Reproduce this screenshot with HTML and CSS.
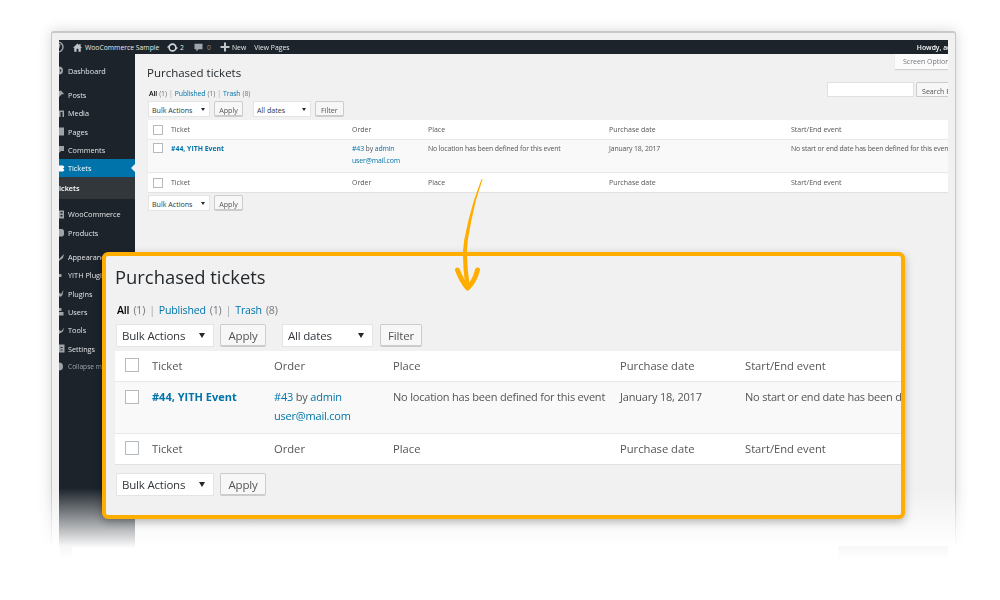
FILE: index.html
```html
<!DOCTYPE html>
<html lang="en">
<head>
    <meta charset="UTF-8">
    <title>Purchased tickets</title>
    <link rel="stylesheet" href="styles.css">
</head>
<body>
    <div class="stage">
        <div class="window">
            <div class="screen">
                <div class="adminbar">
                    <svg class="bar-icon logo" viewBox="0 0 12 12"><circle cx="6" cy="6" r="5" fill="none" stroke="#a0a5aa" stroke-width="1.4"/><path d="M4 3l2 6 2-6" fill="none" stroke="#a0a5aa" stroke-width="1.2"/></svg>
                    <svg class="bar-icon home" viewBox="0 0 10 10"><path d="M5 .6L0 5.2h1.400V9.800h2.500V6.400h2.200v3.400h2.500V5.200H10L8.400 3.700V1H7v1.400z" fill="#c3c6c9"/></svg>
                    <span class="bar-site">WooCommerce Sample</span>
                    <svg class="bar-icon refresh" viewBox="0 0 12 12"><circle cx="6" cy="6" r="3.700" fill="none" stroke="#d5d7d9" stroke-width="1.700"/><path d="M0 6h3L1.500 3.800zM12 6H9l1.500 2.200z" fill="#d5d7d9"/></svg>
                    <span class="bar-count">2</span>
                    <svg class="bar-icon comment" viewBox="0 0 9 9"><path d="M.5.800h8v5.400H4.600L2.400 8.600V6.200H.5z" fill="#a0a5aa"/></svg>
                    <span class="bar-count dim">0</span>
                    <svg class="bar-icon plus" viewBox="0 0 9 9"><path d="M3.600.5h1.800v3.100h3.100v1.800H5.400v3.100H3.600V5.400H.5V3.600h3.100z" fill="#c3c6c9"/></svg>
                    <span class="bar-new">New</span>
                    <span class="bar-view">View Pages</span>
                    <span class="bar-howdy">Howdy, admin</span>
                </div>
                <div class="columns">
                    <ul class="adminmenu">
                        <li class="group"><svg class="mi" viewBox="0 0 6 9"><path d="M0 .5a4 4 0 0 1 0 8zM1 3v3l1.500-1.500z" fill-rule="evenodd"/></svg>Dashboard</li>
                        <li class="group"><svg class="mi" viewBox="0 0 6 9"><path d="M0 1l2-.5 3 3.500-2.500.5L0 7z"/></svg>Posts</li>
                        <li><svg class="mi" viewBox="0 0 6 9"><path d="M0 1.500h5v6.500H3.500V3H1.500v5H0z"/></svg>Media</li>
                        <li><svg class="mi" viewBox="0 0 6 9"><path d="M0 .5h5v8H0z"/></svg>Pages</li>
                        <li><svg class="mi" viewBox="0 0 6 9"><path d="M0 1h5v5H2L0 8z"/></svg>Comments</li>
                        <li class="current"><svg class="mi" viewBox="0 0 6 9"><path d="M0 1.500h4L5.500 3 4 4.500l1.500 1.500L4 7.500H0z"/></svg>Tickets</li>
                        <li class="submenu">ickets</li>
                        <li class="group"><svg class="mi" viewBox="0 0 6 9"><path d="M0 .5h5v8H0zM1.500 2v1.500h2V2zM1.500 5v1.500h2V5z" fill-rule="evenodd"/></svg>WooCommerce</li>
                        <li><svg class="mi" viewBox="0 0 6 9"><path d="M0 1h3.500L5 2.500V7L3.500 8.500H0z"/></svg>Products</li>
                        <li class="group"><svg class="mi" viewBox="0 0 6 9"><path d="M0 6L5 1 4 5 0 8z"/></svg>Appearance</li>
                        <li><svg class="mi" viewBox="0 0 6 9"><path d="M0 3h2.500v3H0z"/></svg>YITH Plugins</li>
                        <li><svg class="mi" viewBox="0 0 6 9"><path d="M0 3.500L2 5 4.500 1 3.500 6 1.500 8 0 7z"/></svg>Plugins</li>
                        <li><svg class="mi" viewBox="0 0 6 9"><path d="M0 1h2.500v3H0zM0 5h4.500v3.500H0z"/></svg>Users</li>
                        <li><svg class="mi" viewBox="0 0 6 9"><path d="M0 4l2.500 1L5 1.500 4 5.500 1.500 7 0 8z"/></svg>Tools</li>
                        <li><svg class="mi" viewBox="0 0 6 9"><path d="M0 .5h5.500v8H0zM1.500 3v1h2V3zM1.500 5.500v1h2v-1z" fill-rule="evenodd"/></svg>Settings</li>
                        <li class="collapse"><svg class="mi" viewBox="0 0 6 9"><path d="M0 .5a4 4 0 0 1 0 8z"/></svg>Collapse menu</li>
                    </ul>
                    <div class="content small">
                        <div class="screen-options"><span>Screen Options</span></div>
                        <h1>Purchased tickets</h1>
                        <div class="search-box">
                            <span class="search-input"></span>
                            <span class="btn search-btn">Search Purchased tickets</span>
                        </div>
                        <p class="subsub"><b>All</b> <em>(1)</em> <u>|</u> <a>Published</a> <em>(1)</em> <u>|</u> <a>Trash</a> <em>(8)</em></p>
                        <div class="tablenav">
                            <span class="select bulk">Bulk Actions</span>
                            <span class="btn apply">Apply</span>
                            <span class="select dates">All dates</span>
                            <span class="btn filter">Filter</span>
                        </div>
                        <div class="table">
                            <div class="row head">
                                <span class="check"></span><span>Ticket</span><span>Order</span><span>Place</span><span>Purchase date</span><span>Start/End event</span>
                            </div>
                            <div class="row body">
                                <span class="check"></span>
                                <span><a class="strong">#44, YITH Event</a></span>
                                <span><a>#43</a> by <a>admin</a><br><a>user@mail.com</a></span>
                                <span>No location has been defined for this event</span>
                                <span>January 18, 2017</span>
                                <span>No start or end date has been defined for this event</span>
                            </div>
                            <div class="row foot">
                                <span class="check"></span><span>Ticket</span><span>Order</span><span>Place</span><span>Purchase date</span><span>Start/End event</span>
                            </div>
                        </div>
                        <div class="tablenav lower">
                            <span class="select bulk">Bulk Actions</span>
                            <span class="btn apply">Apply</span>
                        </div>
                    </div>
                </div>
            </div>
        </div>

        <div class="fade"></div>
        <div class="scrap scrap-left"></div>
        <div class="scrap scrap-right"></div>

        <div class="panel">
            <div class="content large">
                <h1>Purchased tickets</h1>
                <p class="subsub"><b>All</b> <em>(1)</em> <u>|</u> <a>Published</a> <em>(1)</em> <u>|</u> <a>Trash</a> <em>(8)</em></p>
                <div class="tablenav">
                    <span class="select bulk">Bulk Actions</span>
                    <span class="btn apply">Apply</span>
                    <span class="select dates">All dates</span>
                    <span class="btn filter">Filter</span>
                </div>
                <div class="table">
                    <div class="row head">
                        <span class="check"></span><span>Ticket</span><span>Order</span><span>Place</span><span>Purchase date</span><span>Start/End event</span>
                    </div>
                    <div class="row body">
                        <span class="check"></span>
                        <span><a class="strong">#44, YITH Event</a></span>
                        <span><a>#43</a> by <a>admin</a><br><a>user@mail.com</a></span>
                        <span>No location has been defined for this event</span>
                        <span>January 18, 2017</span>
                        <span>No start or end date has been defined for this event</span>
                    </div>
                    <div class="row foot">
                        <span class="check"></span><span>Ticket</span><span>Order</span><span>Place</span><span>Purchase date</span><span>Start/End event</span>
                    </div>
                </div>
                <div class="tablenav lower">
                    <span class="select bulk">Bulk Actions</span>
                    <span class="btn apply">Apply</span>
                </div>
            </div>
        </div>

        <svg class="arrow" viewBox="0 0 40 120">
            <path d="M26.500 1L19 22 13.500 42 9.200 62 7.800 75 8.600 92 10.500 110H15L12.800 92 11.800 75 12.800 62 16.500 42 21 22 27.500 1.500Z" fill="#ffae00"/>
            <path d="M2.500 92C5 99 9 106 12.700 110 17 106 20.500 100 22.500 92" fill="none" stroke="#ffae00" stroke-width="5" stroke-linecap="round" stroke-linejoin="round"/>
        </svg>
    </div>
</body>
</html>
```

FILE: styles.css
```css
body {
    margin: 0;
    background-color: #fff;
    font-family: "Open Sans", "Noto Sans", sans-serif;
    color: #555;
}

.stage {
    position: relative;
    width: 1000px;
    height: 600px;
    overflow: hidden;
    background-color: #fff;
}

/* the browser window with the full wp-admin page */
.window {
    position: absolute;
    left: 51px;
    top: 31px;
    width: 889px;
    height: 530px;
    padding: 7px 7px 0;
    background-color: #f1f1f1;
    border: 1px solid #c8c8c8;
    border-width: 2px 1px 0;
    border-radius: 3px 3px 0 0;
    box-shadow: 0 0 14px rgba(0, 0, 0, 0.16);
}

.screen {
    height: 100%;
    overflow: hidden;
    filter: blur(0.3px);
}

.adminbar {
    display: flex;
    align-items: center;
    height: 14px;
    background-color: #1c232b;
    color: #e6e8e9;
    font-size: 6.800px;
    white-space: nowrap;
}

.bar-icon {
    flex: none;
}

.logo {
    width: 12px;
    height: 12px;
    margin-left: -7px;
}

.home {
    width: 9px;
    height: 9px;
    margin-left: 9px;
}

.bar-site {
    width: 74px;
    margin-left: 3px;
}

.refresh {
    width: 11px;
    height: 11px;
    margin-left: 8px;
}

.bar-count {
    margin-left: 2px;
    width: 6px;
}

.comment {
    width: 9px;
    height: 9px;
    margin-left: 8px;
}

.dim {
    margin-left: 4px;
    color: #8b9095;
}

.plus {
    width: 10px;
    height: 10px;
    margin-left: 7px;
}

.bar-new {
    margin-left: 2px;
}

.bar-view {
    margin-left: 8px;
}

.bar-howdy {
    margin-left: auto;
    margin-right: -16px;
    font-weight: 600;
    color: #fff;
}

.columns {
    display: flex;
    height: 520px;
}

.adminmenu {
    flex: none;
    width: 76px;
    margin: 0;
    padding: 7.500px 0 0;
    list-style: none;
    overflow: hidden;
    background-color: #1c232b;
    color: #e4e6e7;
    font-size: 7.300px;
}

.adminmenu li {
    display: flex;
    align-items: center;
    height: 18.300px;
    white-space: nowrap;
}

.adminmenu li.group {
    margin-top: 6px;
}

.adminmenu li:first-child {
    margin-top: 0;
}

.mi {
    flex: none;
    width: 6px;
    height: 9px;
    margin-right: 3px;
    fill: #9ea3a8;
}

.adminmenu .current {
    position: relative;
    background-color: #0073aa;
    color: #fff;
}

.adminmenu .current .mi {
    fill: #fff;
}

.adminmenu .current::after {
    content: "";
    position: absolute;
    right: 0;
    top: 5px;
    border: 4px solid transparent;
    border-right-color: #f1f1f1;
}

.adminmenu .submenu {
    height: 22px;
    background-color: #32373c;
    color: #fff;
    font-weight: 600;
}

.adminmenu .collapse {
    color: #a0a5aa;
    font-size: 6.600px;
}

/* shared wp list table, sized per copy below */
.content {
    position: relative;
    flex: 1;
    min-width: 0;
}

.content h1 {
    margin: 0;
    font-weight: 400;
    color: #23282d;
}

.subsub {
    margin: 0;
}

.subsub b {
    font-weight: 600;
    color: #000;
}

.subsub em {
    font-style: normal;
    color: #72777c;
}

.subsub u {
    text-decoration: none;
    color: #a0a5aa;
}

.content a,
.subsub a {
    color: #0073aa;
}

.content .strong {
    font-weight: 700;
    letter-spacing: 0;
}

.tablenav {
    display: flex;
    align-items: center;
}

.select {
    position: relative;
    box-sizing: border-box;
    background-color: #fff;
    border: 1px solid #e4e4e4;
    color: #32373c;
    white-space: nowrap;
}

.select::after {
    content: "";
    position: absolute;
    top: 50%;
    border-style: solid;
    border-color: #23282d transparent transparent;
}

.btn {
    box-sizing: border-box;
    background-color: #f7f7f7;
    border: 1px solid #ccc;
    border-bottom-width: 2px;
    border-radius: 2px;
    color: #555;
    text-align: center;
    white-space: nowrap;
}

.table {
    background-color: #fff;
    box-shadow: 0 1px 1px rgba(0, 0, 0, 0.06);
}

.row {
    display: grid;
    white-space: nowrap;
}

.row.head,
.row.foot {
    letter-spacing: 0;
}

.row .check {
    box-sizing: border-box;
    background-color: #fff;
    border: 1px solid #b4b9be;
}

.row.body {
    background-color: #f9f9f9;
    border-top: 1px solid #e8e8e8;
    border-bottom: 1px solid #e8e8e8;
}

/* small copy inside the screenshot */
.small {
    padding-left: 12px;
    overflow: hidden;
    font-size: 6.900px;
    letter-spacing: -0.13px;
}

.small h1 {
    padding-top: 12px;
    font-size: 11.500px;
    line-height: 13px;
    letter-spacing: 0;
}

.screen-options {
    position: absolute;
    right: 0;
    top: 0;
    width: 53px;
    height: 15px;
    box-sizing: border-box;
    padding: 3px 0 0 8px;
    overflow: hidden;
    background-color: #fbfbfb;
    box-shadow: 0 1px 1px rgba(0, 0, 0, 0.12);
    color: #72777c;
    font-size: 7px;
    letter-spacing: 0;
    white-space: nowrap;
}

.search-box {
    position: absolute;
    right: 0;
    top: 28px;
    display: flex;
    width: 121px;
    height: 15px;
    gap: 2px;
    overflow: hidden;
}

.search-input {
    flex: none;
    width: 87px;
    background-color: #fff;
    border: 1px solid #e0e0e0;
    box-sizing: border-box;
}

.search-btn {
    flex: none;
    padding: 2px 0 0 4px;
    text-align: left;
}

.small .subsub {
    margin-top: 10px;
    padding-left: 2px;
    line-height: 10px;
    word-spacing: 0.500px;
}

.small .tablenav {
    gap: 4px;
    margin-top: 2px;
    padding-left: 1px;
    height: 16px;
}

.small .select {
    height: 16px;
    padding: 3px 0 0 3px;
    font-size: 7.100px;
    letter-spacing: 0;
}

.small .select::after {
    right: 4px;
    margin-top: -1px;
    border-width: 3px 2px 0;
}

.small .bulk {
    width: 62px;
}

.small .dates {
    width: 58px;
    margin-left: 6px;
}

.small .btn {
    height: 16px;
    padding: 3px 5px 0;
    font-size: 7.100px;
    letter-spacing: 0;
}

.small .apply {
    width: 29px;
    padding-left: 0;
    padding-right: 0;
}

.small .table {
    margin-top: 3px;
    margin-left: 1px;
}

.small .row {
    grid-template-columns: 23px 181px 76px 181px 182px 1fr;
    align-items: center;
    height: 19px;
    font-size: 7px;
}

.small .row.body {
    height: 34px;
    align-items: start;
    padding-top: 3px;
    line-height: 12px;
    box-sizing: border-box;
    font-size: 6.900px;
}

.small .check {
    width: 10px;
    height: 10px;
    margin-left: 5px;
}

.small .lower {
    margin-top: 3px;
}

/* orange callout, enlarged copy */
.fade {
    position: absolute;
    left: 0;
    top: 488px;
    width: 100%;
    height: 60px;
    background: linear-gradient(rgba(255, 255, 255, 0), #fff);
}

.fade::after {
    content: "";
    position: absolute;
    left: 0;
    top: 60px;
    width: 100%;
    height: 60px;
    background-color: #fff;
}

.scrap {
    position: absolute;
    top: 546px;
    height: 14px;
    background: linear-gradient(#f7f7f7, #fff);
}

.scrap-left {
    left: 60px;
    width: 12px;
}

.scrap-right {
    left: 838px;
    width: 110px;
}

.panel {
    position: absolute;
    left: 102px;
    top: 252px;
    width: 795px;
    height: 259px;
    overflow: hidden;
    background-color: #f1f1f1;
    border: 4px solid #ffae00;
    border-radius: 6px;
    box-shadow: 0 3px 8px rgba(0, 0, 0, 0.28);
}

.large {
    height: 100%;
    padding-left: 9px;
    font-size: 11px;
    letter-spacing: -0.2px;
    filter: blur(0.2px);
}

.large h1 {
    padding-top: 9px;
    font-size: 18.400px;
    line-height: 24px;
    letter-spacing: 0;
}

.large .subsub {
    margin-top: 13px;
    padding-left: 2px;
    font-size: 10.600px;
    line-height: 16px;
    word-spacing: 1.500px;
}

.large .tablenav {
    gap: 6px;
    margin-top: 6px;
    padding-left: 1px;
    height: 23px;
}

.large .select {
    height: 23px;
    padding: 3px 0 0 5px;
    font-size: 11.500px;
}

.large .select::after {
    right: 8px;
    margin-top: -3px;
    border-width: 5px 3px 0;
}

.large .bulk {
    width: 98px;
}

.large .dates {
    width: 91px;
    margin-left: 10px;
}

.large .btn {
    height: 23px;
    padding: 3px 0 0;
    font-size: 11.500px;
}

.large .apply {
    width: 46px;
}

.large .filter {
    width: 42px;
    margin-left: 1px;
}

.large .table {
    margin-top: 4px;
}

.large .row {
    grid-template-columns: 37px 122px 119px 227px 125px 1fr;
    align-items: center;
    box-sizing: border-box;
    height: 30px;
    padding-bottom: 2px;
    font-size: 11.200px;
}

.large .row.body {
    height: 53px;
    align-items: start;
    padding: 5px 0 0;
    line-height: 19px;
    font-size: 11px;
}

.large .check {
    width: 14px;
    height: 14px;
    margin-left: 10px;
}

.large .row.body .check {
    margin-top: 3px;
}

.large .lower {
    margin-top: 9px;
}

.arrow {
    position: absolute;
    left: 455px;
    top: 178px;
    width: 40px;
    height: 120px;
}
```
